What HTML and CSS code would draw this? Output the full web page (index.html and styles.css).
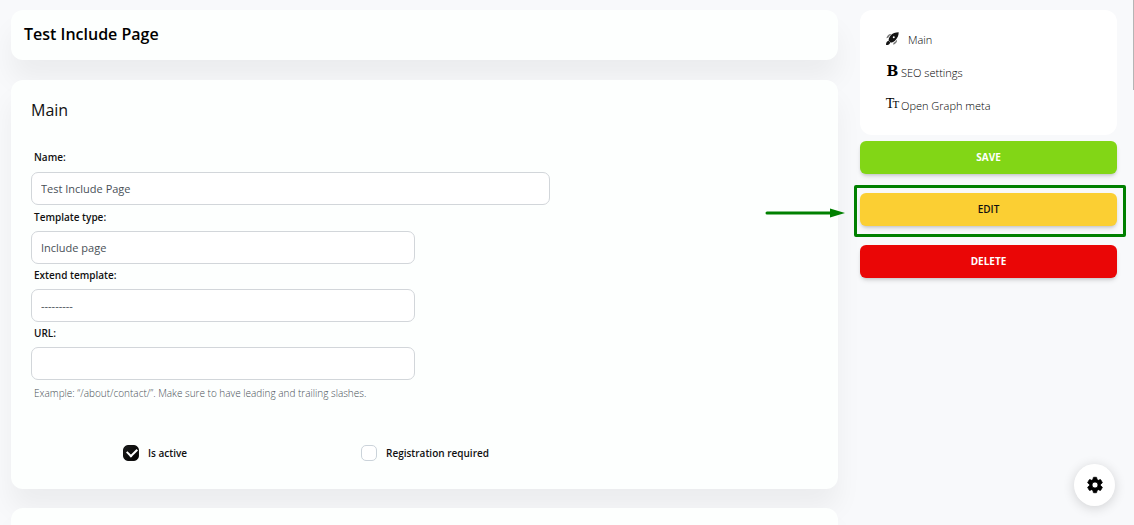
FILE: index.html
```html
<!DOCTYPE html>
<html lang="en">
<head>
<meta charset="utf-8">
<meta name="viewport" content="width=device-width, initial-scale=1">
<title>Test Include Page</title>
<link rel="stylesheet" href="styles.css">
</head>
<body>
<form class="layout">
  <main class="content">
    <header class="card title-card"><h1 class="page-title">Test Include Page</h1></header>
    <section class="card main-card">
      <h2 class="section-title">Main</h2>
      <div class="field field-wide">
        <label class="label" for="name">Name:</label>
        <input class="control" id="name" type="text" value="Test Include Page">
      </div>
      <div class="field">
        <label class="label" for="type">Template type:</label>
        <select class="control" id="type"><option>Include page</option></select>
      </div>
      <div class="field">
        <label class="label" for="extend">Extend template:</label>
        <select class="control" id="extend"><option>---------</option></select>
      </div>
      <div class="field">
        <label class="label" for="url">URL:</label>
        <input class="control" id="url" type="text" aria-describedby="url-help">
        <p class="help" id="url-help">Example: “/about/contact/”. Make sure to have leading and trailing slashes.</p>
      </div>
      <div class="checks">
        <div class="check"><input class="box" type="checkbox" id="active" checked><label class="check-label" for="active">Is active</label></div>
        <div class="check"><input class="box" type="checkbox" id="reg"><label class="check-label" for="reg">Registration required</label></div>
      </div>
    </section>
    <section class="card next-card"></section>
  </main>
  <aside class="side">
    <nav class="nav">
      <a class="nav-link nav-link-spaced" href="#main">
        <svg class="nav-icon rocket" viewBox="0 0 40 40" aria-hidden="true">
          <path fill="#141414" d="M39 1C29 1 20 4 14 11c-4 5-6 11-6 15l6 6c5 0 11-2 15-7C36 18 39 11 39 1z"/>
          <path fill="#777" d="M17 6C8 5 4 11 1 19l6-1c2-5 5-8 10-12zM34 23c1 9-4 13-12 16l1-6c5-2 8-5 11-10z"/>
          <path fill="#141414" d="M8 27c-5 1-8 5-8 13 8 0 12-3 13-8z"/>
          <circle cx="24" cy="16" r="3" fill="#fff"/>
        </svg>
        <span>Main</span>
      </a>
      <a class="nav-link" href="#seo"><span class="nav-icon glyph-bold" aria-hidden="true">B</span><span>SEO settings</span></a>
      <a class="nav-link" href="#og"><span class="nav-icon glyph-type" aria-hidden="true">T<span class="glyph-small">T</span></span><span>Open Graph meta</span></a>
    </nav>
    <div class="actions">
      <button class="btn btn-save" type="button">SAVE</button>
      <div class="edit-slot">
        <button class="btn btn-edit" type="button">EDIT</button>
        <span class="highlight"></span>
        <svg class="arrow" viewBox="0 0 80 10" aria-hidden="true"><path d="M2 5h64" stroke="#008000" stroke-width="3" stroke-linecap="round"/><path d="M65 0.500l15 4.500-15 4.500z" fill="#008000"/></svg>
      </div>
      <button class="btn btn-delete" type="button">DELETE</button>
    </div>
  </aside>
</form>
<button class="settings" type="button" aria-label="Settings">
  <svg class="gear" viewBox="0 0 24 24" aria-hidden="true"><path d="M19.4 13a7.500 7.500 0 0 0 0-2l2.200-1.700a.6.6 0 0 0 .1-.7l-2.100-3.600a.6.6 0 0 0-.7-.2l-2.500 1a7.500 7.500 0 0 0-1.700-1l-.4-2.600a.6.6 0 0 0-.6-.5h-3.400a.6.6 0 0 0-.6.500l-.4 2.600a7.500 7.500 0 0 0-1.700 1l-2.500-1a.6.6 0 0 0-.7.200L2.300 8.600a.6.6 0 0 0 .1.700L4.600 11a7.500 7.500 0 0 0 0 2l-2.200 1.700a.6.6 0 0 0-.1.700L4.400 19c.1.200.4.300.7.200l2.500-1c.5.400 1.100.8 1.700 1l.4 2.600c0 .3.300.5.600.5h3.400c.3 0 .6-.2.600-.5l.4-2.600c.6-.2 1.200-.6 1.700-1l2.500 1c.3.100.6 0 .7-.2l2.100-3.600a.6.6 0 0 0-.1-.7zM12 16a4 4 0 1 1 0-8 4 4 0 0 1 0 8z"/></svg>
</button>
<span class="scroll-thumb"></span>
</body>
</html>
```
FILE: styles.css
```css
* { box-sizing: border-box; }

body {
  margin: 0;
  height: 100vh;
  overflow: hidden;
  background: #f8f9fb;
  font-family: "Open Sans", "Noto Sans", sans-serif;
  color: #111;
}

.layout {
  display: grid;
  grid-template-columns: minmax(0, 1fr) 257px;
  gap: 22px;
  height: 100%;
  padding: 10px 17px 0 11px;
}

.content {
  display: flex;
  flex-direction: column;
  min-height: 0;
}

.card {
  flex: none;
  background: #fdfffe;
  border-radius: 12px;
  box-shadow: 0 20px 27px 0 rgba(0, 0, 0, 0.05);
}

.title-card { padding: 12px 13px 14px; }

.page-title {
  margin: 0;
  color: #000;
  font-size: 16px;
  font-weight: 600;
  line-height: 24px;
}

.main-card { margin: 20px 0 19px; padding: 18px 20px 27px; }

.section-title {
  margin: 0 0 24px;
  font-size: 16px;
  font-weight: 400;
  line-height: 24px;
}

.field { width: 384px; max-width: 100%; }
.field-wide { width: 519px; margin-bottom: 1px; }

.label {
  display: block;
  height: 25px;
  padding: 3px 3px 0;
  font-size: 10px;
  font-weight: 600;
  line-height: 16px;
}

.field-wide .label { height: 26px; }

.control {
  display: block;
  width: 100%;
  height: 33px;
  padding: 0 9px;
  border: 1px solid #d2d6da;
  border-radius: 7px;
  background: #fff;
  color: #495057;
  font: 400 11px/16px "Open Sans", "Noto Sans", sans-serif;
  appearance: none;
}

.help {
  margin: 5px 3px 0;
  color: #495057;
  font-size: 10px;
  font-weight: 300;
  line-height: 16px;
}

.checks {
  display: grid;
  grid-template-columns: 238px 1fr;
  margin-top: 43px;
  padding-left: 92px;
}

.check { display: flex; align-items: center; gap: 9px; }

.box {
  flex: none;
  width: 16px;
  height: 16px;
  margin: 0;
  border: 1px solid #cbd3da;
  border-radius: 5px;
  background: #fff;
  appearance: none;
}

.box:checked {
  position: relative;
  border-color: #111;
  background: linear-gradient(310deg, #000, #1c1c1c);
}

.box:checked::after {
  content: "";
  position: absolute;
  left: 3px;
  top: 2px;
  width: 8px;
  height: 5px;
  border: solid #fff;
  border-width: 0 0 2px 2px;
  transform: rotate(-45deg);
}

.check-label { font-size: 10px; font-weight: 600; line-height: 18px; }

.next-card {
  flex: 1;
  border-radius: 12px 12px 0 0;
}

.nav {
  display: flex;
  flex-direction: column;
  gap: 9px;
  padding: 18px 26px 17px;
  background: #fff;
  border-radius: 12px;
}

.nav-link {
  display: flex;
  align-items: center;
  gap: 2px;
  height: 24px;
  color: #000;
  font-size: 11px;
  font-weight: 300;
  line-height: 16px;
  text-decoration: none;
}

.nav-link-spaced { gap: 9px; }
.nav-icon { flex: none; width: 13px; height: 13px; }
.rocket { margin-bottom: 3px; }

.glyph-bold,
.glyph-type {
  display: flex;
  align-items: baseline;
  justify-content: center;
  height: 20px;
  font-family: "Liberation Serif", serif;
  font-size: 16px;
  line-height: 16px;
}

.glyph-bold { font-family: "DejaVu Serif", serif; font-size: 14px; font-weight: 700; }
.glyph-type { font-size: 14px; }
.glyph-small { margin-left: -2px; font-size: 11px; }

.actions {
  display: flex;
  flex-direction: column;
  gap: 19px;
  margin-top: 6px;
}

.btn {
  display: block;
  width: 100%;
  height: 33px;
  padding: 0 0 2px;
  border: 0;
  border-radius: 6px;
  box-shadow: 0 3px 5px -1px rgba(0, 0, 0, 0.15), 0 2px 3px -1px rgba(0, 0, 0, 0.1);
  color: #fff;
  font: 700 10px/16px "Open Sans", "Noto Sans", sans-serif;
}

.btn-save { background: #82d616; }
.btn-edit { background: #fbcf33; color: #111; font-weight: 600; }
.btn-delete { background: #ea0606; }

.edit-slot { position: relative; }

.highlight {
  position: absolute;
  inset: -8px -9px -11px -6px;
  border: 3px solid #008000;
  border-radius: 2px;
}

.arrow {
  position: absolute;
  right: calc(100% + 15px);
  top: 15px;
  width: 80px;
  height: 10px;
}

.settings {
  position: fixed;
  right: 19px;
  bottom: 19px;
  display: grid;
  place-items: center;
  width: 41px;
  height: 42px;
  padding: 0;
  border: 0;
  border-radius: 50%;
  background: #fff;
  box-shadow: 0 2px 12px rgba(0, 0, 0, 0.16);
}

.gear { width: 18px; height: 18px; stroke: #000; stroke-width: 1; }

.scroll-thumb {
  position: fixed;
  top: 0;
  right: 0;
  width: 1px;
  height: 90px;
  background: #b5b5b5;
}
```
